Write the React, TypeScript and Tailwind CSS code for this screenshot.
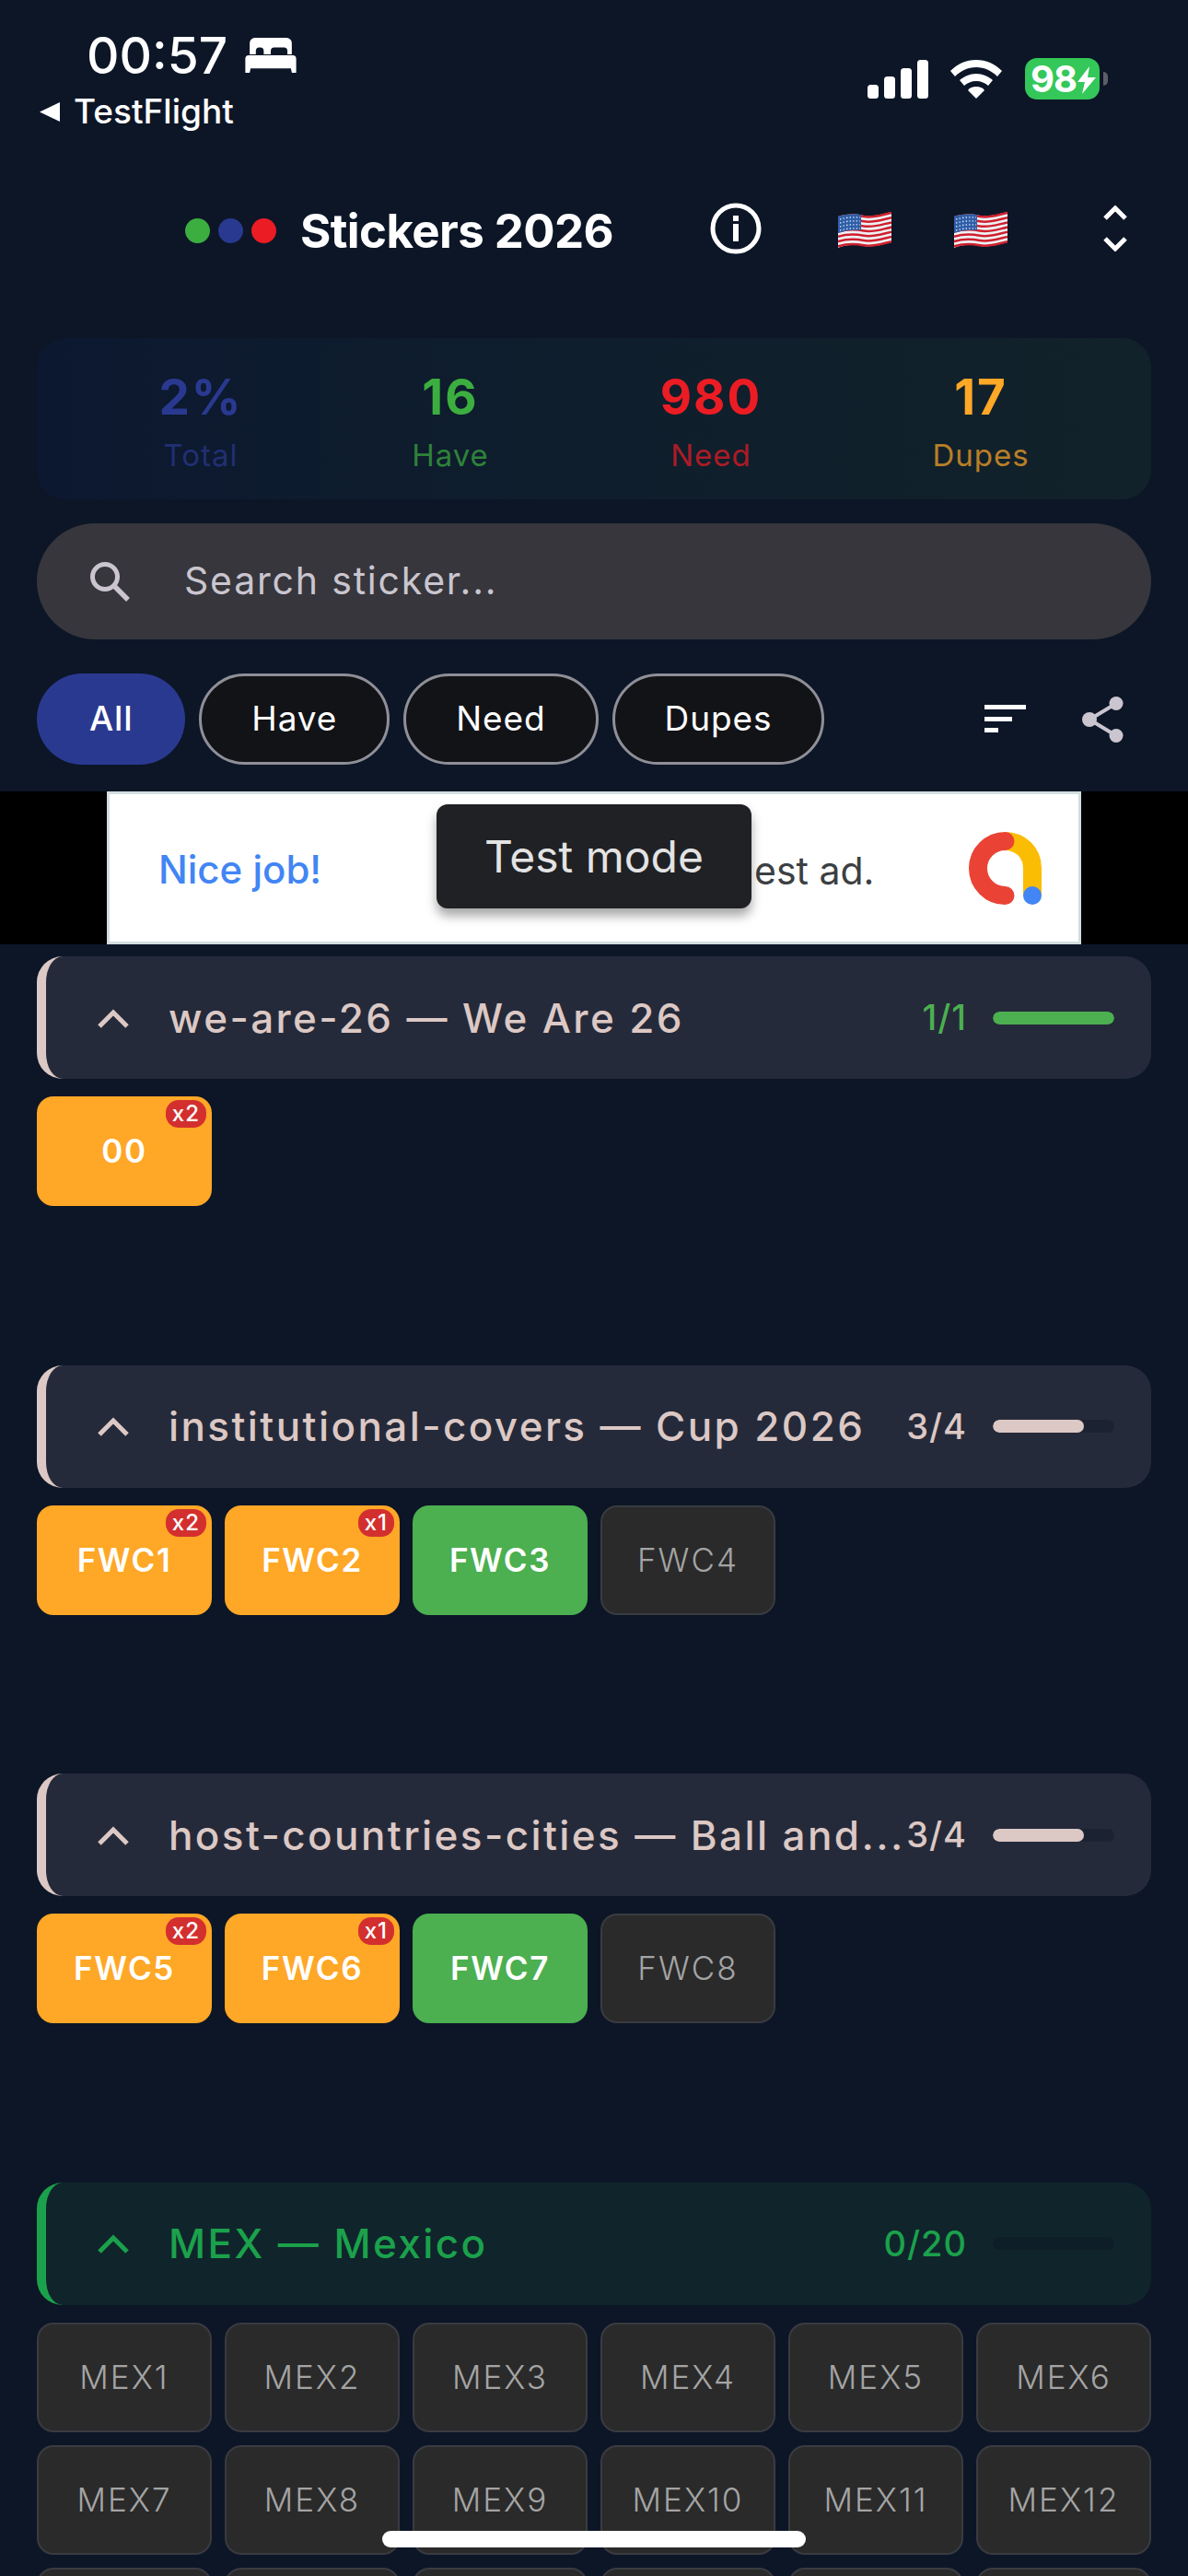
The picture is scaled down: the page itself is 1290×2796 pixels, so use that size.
type Sticker = { label: string; kind: "dupe" | "have" | "none"; count?: number };

type Section = {
  title: string;
  progress: string;
  pct: number;
  color: string;
  headBg: string;
  stickers: Sticker[];
};

const SECTIONS: Section[] = [
  {
    title: "we-are-26 — We Are 26",
    progress: "1/1",
    pct: 100,
    color: "#dcc8c4",
    headBg: "bg-[#252a3a]",
    stickers: [{ label: "00", kind: "dupe", count: 2 }],
  },
  {
    title: "institutional-covers — Cup 2026",
    progress: "3/4",
    pct: 75,
    color: "#dcc8c4",
    headBg: "bg-[#252a3a]",
    stickers: [
      { label: "FWC1", kind: "dupe", count: 2 },
      { label: "FWC2", kind: "dupe", count: 1 },
      { label: "FWC3", kind: "have" },
      { label: "FWC4", kind: "none" },
    ],
  },
  {
    title: "host-countries-cities — Ball and...",
    progress: "3/4",
    pct: 75,
    color: "#dcc8c4",
    headBg: "bg-[#252a3a]",
    stickers: [
      { label: "FWC5", kind: "dupe", count: 2 },
      { label: "FWC6", kind: "dupe", count: 1 },
      { label: "FWC7", kind: "have" },
      { label: "FWC8", kind: "none" },
    ],
  },
];

// only the top edge of the third row is on screen, its labels fall below the fold
const MEX: Sticker[] = Array.from({ length: 18 }, (_, i) => ({
  label: i < 12 ? `MEX${i + 1}` : "",
  kind: "none",
}));

const STATS = [
  { value: "2%", label: "Total", color: "#2a3990" },
  { value: "16", label: "Have", color: "#3cae3f" },
  { value: "980", label: "Need", color: "#ec1c24" },
  { value: "17", label: "Dupes", color: "#ffa726" },
];

function Flag() {
  const stripes = [0, 1, 2, 3, 4, 5, 6];
  return (
    <svg width="58" height="42" viewBox="0 0 58 42">
      <path d="M0 7 C10 4 18 4 28 6 C38 8 48 4 58 2 V35 C48 37 38 41 28 39 C18 37 10 37 0 41 Z" fill="#eef1f4" />
      {stripes.map((i) => (
        <path
          key={i}
          d={`M0 ${8 + i * 5.2} C10 ${5 + i * 5.2} 18 ${5 + i * 5.2} 28 ${7 + i * 5.2} C38 ${9 + i * 5.2} 48 ${5 + i * 5.2} 58 ${3 + i * 5.2}`}
          fill="none"
          stroke="#cf1f2e"
          strokeWidth="2.5"
        />
      ))}
      <path d="M0 7 C8 4.500 16 4 25 5 V22 C16 21 8 22 0 25 Z" fill="#2f5ea8" />
      <path d="M2 10 C9 8 16 7.500 24 8 M2 14 C9 12 16 11.500 24 12 M2 18 C9 16 16 15.500 24 16 M2 22 C9 20 16 19.500 24 20" fill="none" stroke="#dfe8f5" strokeWidth="1.4" strokeDasharray="1.4 2.200" />
    </svg>
  );
}

function StickerCell({ s }: { s: Sticker }) {
  if (s.kind === "none") {
    return (
      <div className="flex h-[119px] items-center justify-center rounded-[18px] border-2 border-[#3a3b40] bg-[#2a2a2a] text-[35px] font-light tracking-[2px] text-[#a4a4a4]">
        {s.label}
      </div>
    );
  }
  return (
    <div
      className={`relative flex h-[119px] items-center justify-center rounded-[18px] text-[35px] font-semibold tracking-[1.6px] text-white ${
        s.kind === "dupe" ? "bg-[#ffa726]" : "bg-[#4caf50]"
      }`}
    >
      {s.label}
      {s.count ? (
        <span className="absolute right-[6px] top-[4px] flex h-[30px] items-center rounded-[14px] bg-[#d32f2f] px-[7px] text-[24px] font-medium leading-none tracking-[1px] text-white">
          x{s.count}
        </span>
      ) : null}
    </div>
  );
}

function SectionHead({
  title,
  progress,
  pct,
  color,
  headBg,
}: Pick<Section, "title" | "progress" | "pct" | "color" | "headBg">) {
  return (
    <div
      className={`flex h-[133px] items-center rounded-[28px] border-l-[10px] pl-[56px] pr-[40px] ${headBg}`}
      style={{ borderLeftColor: color }}
    >
      <svg width="34" height="22" viewBox="0 0 34 22" fill="none" stroke={color} strokeWidth="5" className="shrink-0">
        <path d="M2 20 17 5l15 15" />
      </svg>
      <span
        className="ml-[43px] min-w-0 flex-1 overflow-hidden whitespace-nowrap text-[44px] font-medium tracking-[2.4px]"
        style={{ color }}
      >
        {title}
      </span>
      <span
        className="shrink-0 text-[38px] font-medium tracking-[1px]"
        style={{ color: pct === 100 ? "#4caf50" : color }}
      >
        {progress}
      </span>
      <div className="ml-[28px] h-[14px] w-[132px] shrink-0 overflow-hidden rounded-full bg-[#0d1626]/40">
        <div
          className="h-full rounded-full"
          style={{ width: `${pct}%`, backgroundColor: pct === 100 ? "#4caf50" : color }}
        />
      </div>
    </div>
  );
}

export default function App() {
  return (
    <div className="relative h-[2796px] w-[1290px] overflow-hidden bg-[#0c1627] font-['Inter',sans-serif] text-white">
      {/* status bar */}
      <div className="flex h-[200px] items-start justify-between">
        <div className="pl-[43px] pt-[28px]">
          <div className="flex items-center pl-[51px]">
            <span className="text-[55px] font-medium leading-[64px]">00:57</span>
            <svg className="ml-[18px]" width="58" height="40" viewBox="0 0 60 42" fill="#fff">
              <path d="M6 20V7a6 6 0 0 1 6-6h36a6 6 0 0 1 6 6v13h-5v-4a4 4 0 0 0-4-4h-11a4 4 0 0 0-4 4v4h-8v-4a4 4 0 0 0-4-4H17a4 4 0 0 0-4 4v4Z" />
              <path d="M5 21h50a4 4 0 0 1 4 4v16h-5l-1-5H7l-1 5H1V25a4 4 0 0 1 4-4Z" />
            </svg>
          </div>
          <div className="mt-[7px] flex items-center">
            <svg width="22" height="21" viewBox="0 0 22 21" fill="#fff">
              <path d="M0 10.500 22 0v21Z" />
            </svg>
            <span className="ml-[15px] text-[37px] font-medium leading-[44px]">TestFlight</span>
          </div>
        </div>
        <div className="flex items-center pr-[96px] pt-[63px]">
          <svg width="66" height="42" viewBox="0 0 66 42" fill="#fff">
            <rect x="0" y="27" width="12" height="15" rx="3.500" />
            <rect x="18" y="18" width="12" height="24" rx="3.500" />
            <rect x="36" y="9" width="12" height="33" rx="3.500" />
            <rect x="54" y="0" width="12" height="42" rx="3.500" />
          </svg>
          <svg className="ml-[24px]" width="56" height="42" viewBox="0 0 56 42" fill="#fff">
            <path d="M28 0C17 0 8 4 0 12l5 6c6-6 14-10 23-10s17 4 23 10l5-6C48 4 39 0 28 0Z" />
            <path d="M28 15c-7 0-13 3-18 7l5 6c3-3 8-5 13-5s10 2 13 5l5-6c-5-4-11-7-18-7Z" />
            <path d="M28 29c-4 0-7 1-9 4l9 9 9-9c-2-3-5-4-9-4Z" />
          </svg>
          <div className="relative ml-[25px] flex h-[45px] w-[81px] items-center rounded-[13px] bg-[#34c759] pl-[6px] text-[40px] font-bold leading-none tracking-[-1px]">
            98
            <svg className="absolute right-[4px] top-[9px]" width="20" height="30" viewBox="0 0 20 30" fill="#fff">
              <path d="M13 0 0 17h8l-3 13L20 12h-9Z" />
            </svg>
            <span className="absolute right-[-9px] top-[15px] h-[15px] w-[5px] rounded-r-full bg-[#5b5f68]" />
          </div>
        </div>
      </div>

      {/* app bar */}
      <div className="relative flex h-[100px] items-center">
        <div className="ml-[201px] flex gap-[9px]">
          <span className="h-[27px] w-[27px] rounded-full bg-[#3cae3f]" />
          <span className="h-[27px] w-[27px] rounded-full bg-[#2a3990]" />
          <span className="h-[27px] w-[27px] rounded-full bg-[#ec1c24]" />
        </div>
        <span className="ml-[26px] text-[51px] font-bold leading-none tracking-[-0.6px]">Stickers 2026</span>
        <svg className="absolute left-[771px] top-[20px]" width="56" height="56" viewBox="0 0 56 56" fill="#fff">
          <circle cx="28" cy="28" r="25" fill="none" stroke="#fff" strokeWidth="5" />
          <rect x="25" y="14" width="6" height="6" />
          <rect x="25" y="23" width="6" height="19" />
        </svg>
        <div className="absolute left-[910px] top-[28px]">
          <Flag />
        </div>
        <div className="absolute left-[1036px] top-[28px]">
          <Flag />
        </div>
        <svg className="absolute left-[1198px] top-[23px]" width="26" height="50" viewBox="0 0 26 50" fill="none" stroke="#fff" strokeWidth="5">
          <path d="M2 14 13 3l11 11M2 36l11 11 11-11" />
        </svg>
      </div>

      {/* stats */}
      <div className="mx-[40px] mt-[67px] grid h-[175px] grid-cols-[356px_186px_380px_206px] rounded-[32px] bg-gradient-to-r from-[#0c1830] via-[#0f1e2c] to-[#12222a] pt-[32px] text-center">
        {STATS.map((s) => (
          <div key={s.label} style={{ color: s.color }}>
            <div className="text-[53px] font-bold leading-[64px] tracking-[2px]">{s.value}</div>
            <div className="mt-[11px] text-[33px] leading-[40px] tracking-[1px] opacity-70">{s.label}</div>
          </div>
        ))}
      </div>

      {/* search */}
      <div className="mx-[40px] mt-[26px] flex h-[126px] items-center rounded-full bg-[#36363c] pl-[57px] text-[#cac5cf]">
        <svg width="44" height="44" viewBox="0 0 44 44" fill="none" stroke="#cac5cf" className="shrink-0">
          <circle cx="17" cy="17" r="13.500" strokeWidth="5" />
          <path d="M27 27l15 15" strokeWidth="5.500" />
        </svg>
        <span className="ml-[59px] text-[41px] tracking-[1.8px]">Search sticker...</span>
      </div>

      {/* filters */}
      <div className="mx-[40px] mt-[37px] flex h-[99px] items-center">
        <div className="flex h-full items-center rounded-full bg-[#2a3990] px-[57px] pb-[2px] text-[37px] font-medium tracking-[0.8px]">All</div>
        {["Have", "Need", "Dupes"].map((f) => (
          <div
            key={f}
            className="ml-[15px] flex h-full items-center rounded-full border-[3px] border-[#8f8f98] bg-[#121317] px-[54px] pb-[2px] text-[37px] tracking-[0.9px]"
          >
            {f}
          </div>
        ))}
        <svg className="ml-auto" width="45" height="31" viewBox="0 0 45 31" fill="#fff">
          <rect x="0" y="0" width="45" height="5" />
          <rect x="0" y="13" width="30" height="5" />
          <rect x="0" y="25" width="15" height="5" />
        </svg>
        <svg className="ml-[61px] mr-[30px]" width="45" height="50" viewBox="0 0 45 50" fill="#cac5cf" stroke="#cac5cf">
          <path d="M37 7.500 8 25l29 17.500" fill="none" strokeWidth="4" />
          <circle cx="37" cy="7.500" r="7.500" stroke="none" />
          <circle cx="8" cy="25" r="8" stroke="none" />
          <circle cx="37" cy="42.500" r="7.500" stroke="none" />
        </svg>
      </div>

      {/* ad banner */}
      <div className="relative mt-[29px] flex h-[166px] justify-center bg-black">
        <div className="relative flex w-[1058px] items-center border-[3px] border-[#d3dde0] bg-white pl-[53px] pt-[3px] text-[#3c4043]">
          <span className="text-[42px] font-medium text-[#4285f4]">Nice job!</span>
          <span className="absolute left-[700px] top-[53px] text-[41px]">est ad.</span>
          <svg className="absolute left-[933px] top-[41px]" width="79" height="79" viewBox="0 0 79 79" fill="none" strokeWidth="20">
            <path d="M39 10C57 10 69 23 69 39.500V69" stroke="#fbbc04" />
            <path d="M39.500 10a29.500 29.500 0 0 0 0 59" stroke="#ea4335" strokeLinecap="round" />
            <circle cx="69" cy="69" r="10" fill="#4285f4" />
          </svg>
        </div>
        <div className="absolute left-[474px] top-[14px] flex h-[113px] w-[342px] items-center justify-center rounded-[12px] bg-[#202124] text-[48px] text-[#e3e3e3] shadow-[0_8px_12px_rgba(0,0,0,0.35)]">
          Test mode
        </div>
      </div>

      {/* sections */}
      <div className="mx-[40px] mt-[13px]">
        {SECTIONS.map((sec) => (
          <div key={sec.title} className="h-[443.5px]">
            <SectionHead {...sec} />
            <div className="mt-[19px] grid grid-cols-6 gap-[14px]">
              {sec.stickers.map((s) => (
                <StickerCell key={s.label} s={s} />
              ))}
            </div>
          </div>
        ))}
        <SectionHead
          title="MEX — Mexico"
          progress="0/20"
          pct={0}
          color="#1ba14b"
          headBg="bg-[#10242c]"
        />
        <div className="mt-[19px] grid grid-cols-6 gap-[14px]">
          {MEX.map((s, i) => (
            <StickerCell key={i} s={s} />
          ))}
        </div>
      </div>

      {/* home indicator */}
      <div className="absolute bottom-[31px] left-[415px] h-[18px] w-[460px] rounded-full bg-white" />
    </div>
  );
}
